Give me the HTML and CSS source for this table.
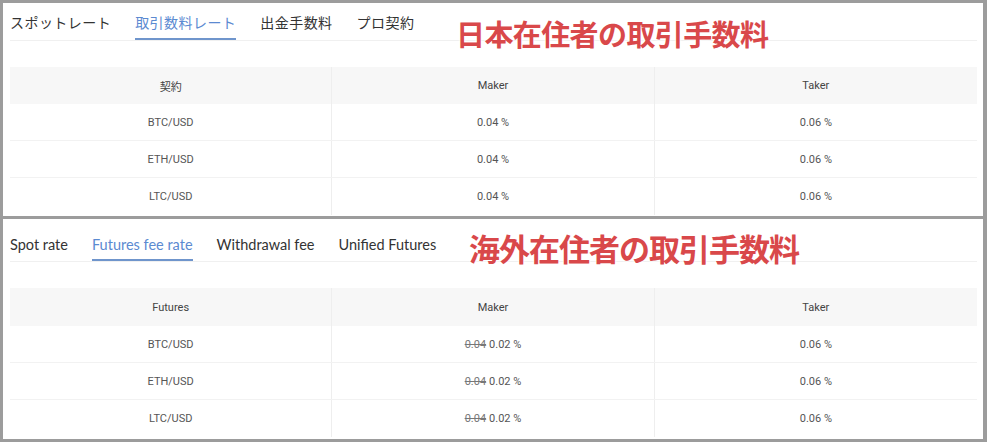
FILE: index.html
```html
<!DOCTYPE html>
<html lang="ja">
<head>
<meta charset="utf-8">
<link rel="stylesheet" href="styles.css">
</head>
<body>
<div class="frame">
  <section class="panel panel-jp">
    <nav class="tabs tabs-jp">
      <span class="tab">スポットレート</span>
      <span class="tab active">取引数料レート</span>
      <span class="tab">出金手数料</span>
      <span class="tab">プロ契約</span>
    </nav>
    <div class="note note-jp">日本在住者の取引手数料</div>
    <div class="table">
      <div class="row head"><div class="cell">契約</div><div class="cell">Maker</div><div class="cell">Taker</div></div>
      <div class="row"><div class="cell">BTC/USD</div><div class="cell">0.04 %</div><div class="cell">0.06 %</div></div>
      <div class="row"><div class="cell">ETH/USD</div><div class="cell">0.04 %</div><div class="cell">0.06 %</div></div>
      <div class="row"><div class="cell">LTC/USD</div><div class="cell">0.04 %</div><div class="cell">0.06 %</div></div>
    </div>
  </section>
  <section class="panel panel-en">
    <nav class="tabs tabs-en">
      <span class="tab">Spot rate</span>
      <span class="tab active">Futures fee rate</span>
      <span class="tab">Withdrawal fee</span>
      <span class="tab">Unified Futures</span>
    </nav>
    <div class="note note-en">海外在住者の取引手数料</div>
    <div class="table">
      <div class="row head"><div class="cell">Futures</div><div class="cell">Maker</div><div class="cell">Taker</div></div>
      <div class="row"><div class="cell">BTC/USD</div><div class="cell"><s>0.04</s> 0.02 %</div><div class="cell">0.06 %</div></div>
      <div class="row"><div class="cell">ETH/USD</div><div class="cell"><s>0.04</s> 0.02 %</div><div class="cell">0.06 %</div></div>
      <div class="row"><div class="cell">LTC/USD</div><div class="cell"><s>0.04</s> 0.02 %</div><div class="cell">0.06 %</div></div>
    </div>
  </section>
</div>
</body>
</html>
```
FILE: styles.css
```css
* { box-sizing: border-box; }
html, body { margin: 0; padding: 0; }
body {
  width: 987px;
  height: 442px;
  background: #9c9c9c;
  overflow: hidden;
}
.frame {
  display: flex;
  flex-direction: column;
  gap: 3px;
  padding: 3px 4px 3px 3px;
  height: 442px;
}
.panel {
  position: relative;
  background: #fff;
  padding: 0 6px 0 7px;
}
.panel-jp { height: 213px; }
.panel-en { height: 220px; }
.tabs {
  display: flex;
  gap: 25px;
  border-bottom: 1px solid #f0f0f0;
  color: #333;
}
.tabs-jp {
  height: 38px;
  font-family: "Noto Sans CJK JP", "Noto Sans", sans-serif;
  font-size: 14px;
  letter-spacing: 0.45px;
  padding-top: 10px;
  gap: 24px;
}
.tabs-en {
  height: 43px;
  font-family: Lato, "Noto Sans", sans-serif;
  font-size: 14.5px;
  padding-top: 17px;
  gap: 24px;
}
.tab {
  line-height: 18px;
  height: 100%;
  white-space: nowrap;
}
.tab.active {
  color: #5b8ad1;
  border-bottom: 2px solid #6f95cc;
}
.note {
  position: absolute;
  font-family: "Noto Sans CJK JP", sans-serif;
  font-weight: 700;
  color: #d9484a;
  white-space: nowrap;
  text-shadow: 0 0 3px #fff, 0 0 3px #fff;
}
.note-jp {
  left: 453px;
  top: 10px;
  font-size: 29px;
  line-height: 40px;
  letter-spacing: -0.6px;
}
.note-en {
  left: 466px;
  top: 8px;
  font-size: 31px;
  line-height: 42px;
  letter-spacing: -1px;
}
.table {
  margin-top: 26px;
  font-family: Roboto, "Noto Sans CJK JP", sans-serif;
  font-size: 11px;
  color: #555;
}
.row {
  display: grid;
  grid-template-columns: 1fr 1fr 1fr;
  height: 37px;
  border-bottom: 1px solid #f2f2f2;
}
.row:last-child { border-bottom: none; }
.row.head {
  background: #f7f7f7;
  color: #444;
  border-bottom: none;
}
.panel-en .row.head { height: 38px; }
.cell {
  display: flex;
  align-items: center;
  justify-content: center;
  border-right: 1px solid #eeeeee;
}
.cell:last-child { border-right: none; }
.cell s {
  color: #777;
  margin-right: 3px;
}
```
